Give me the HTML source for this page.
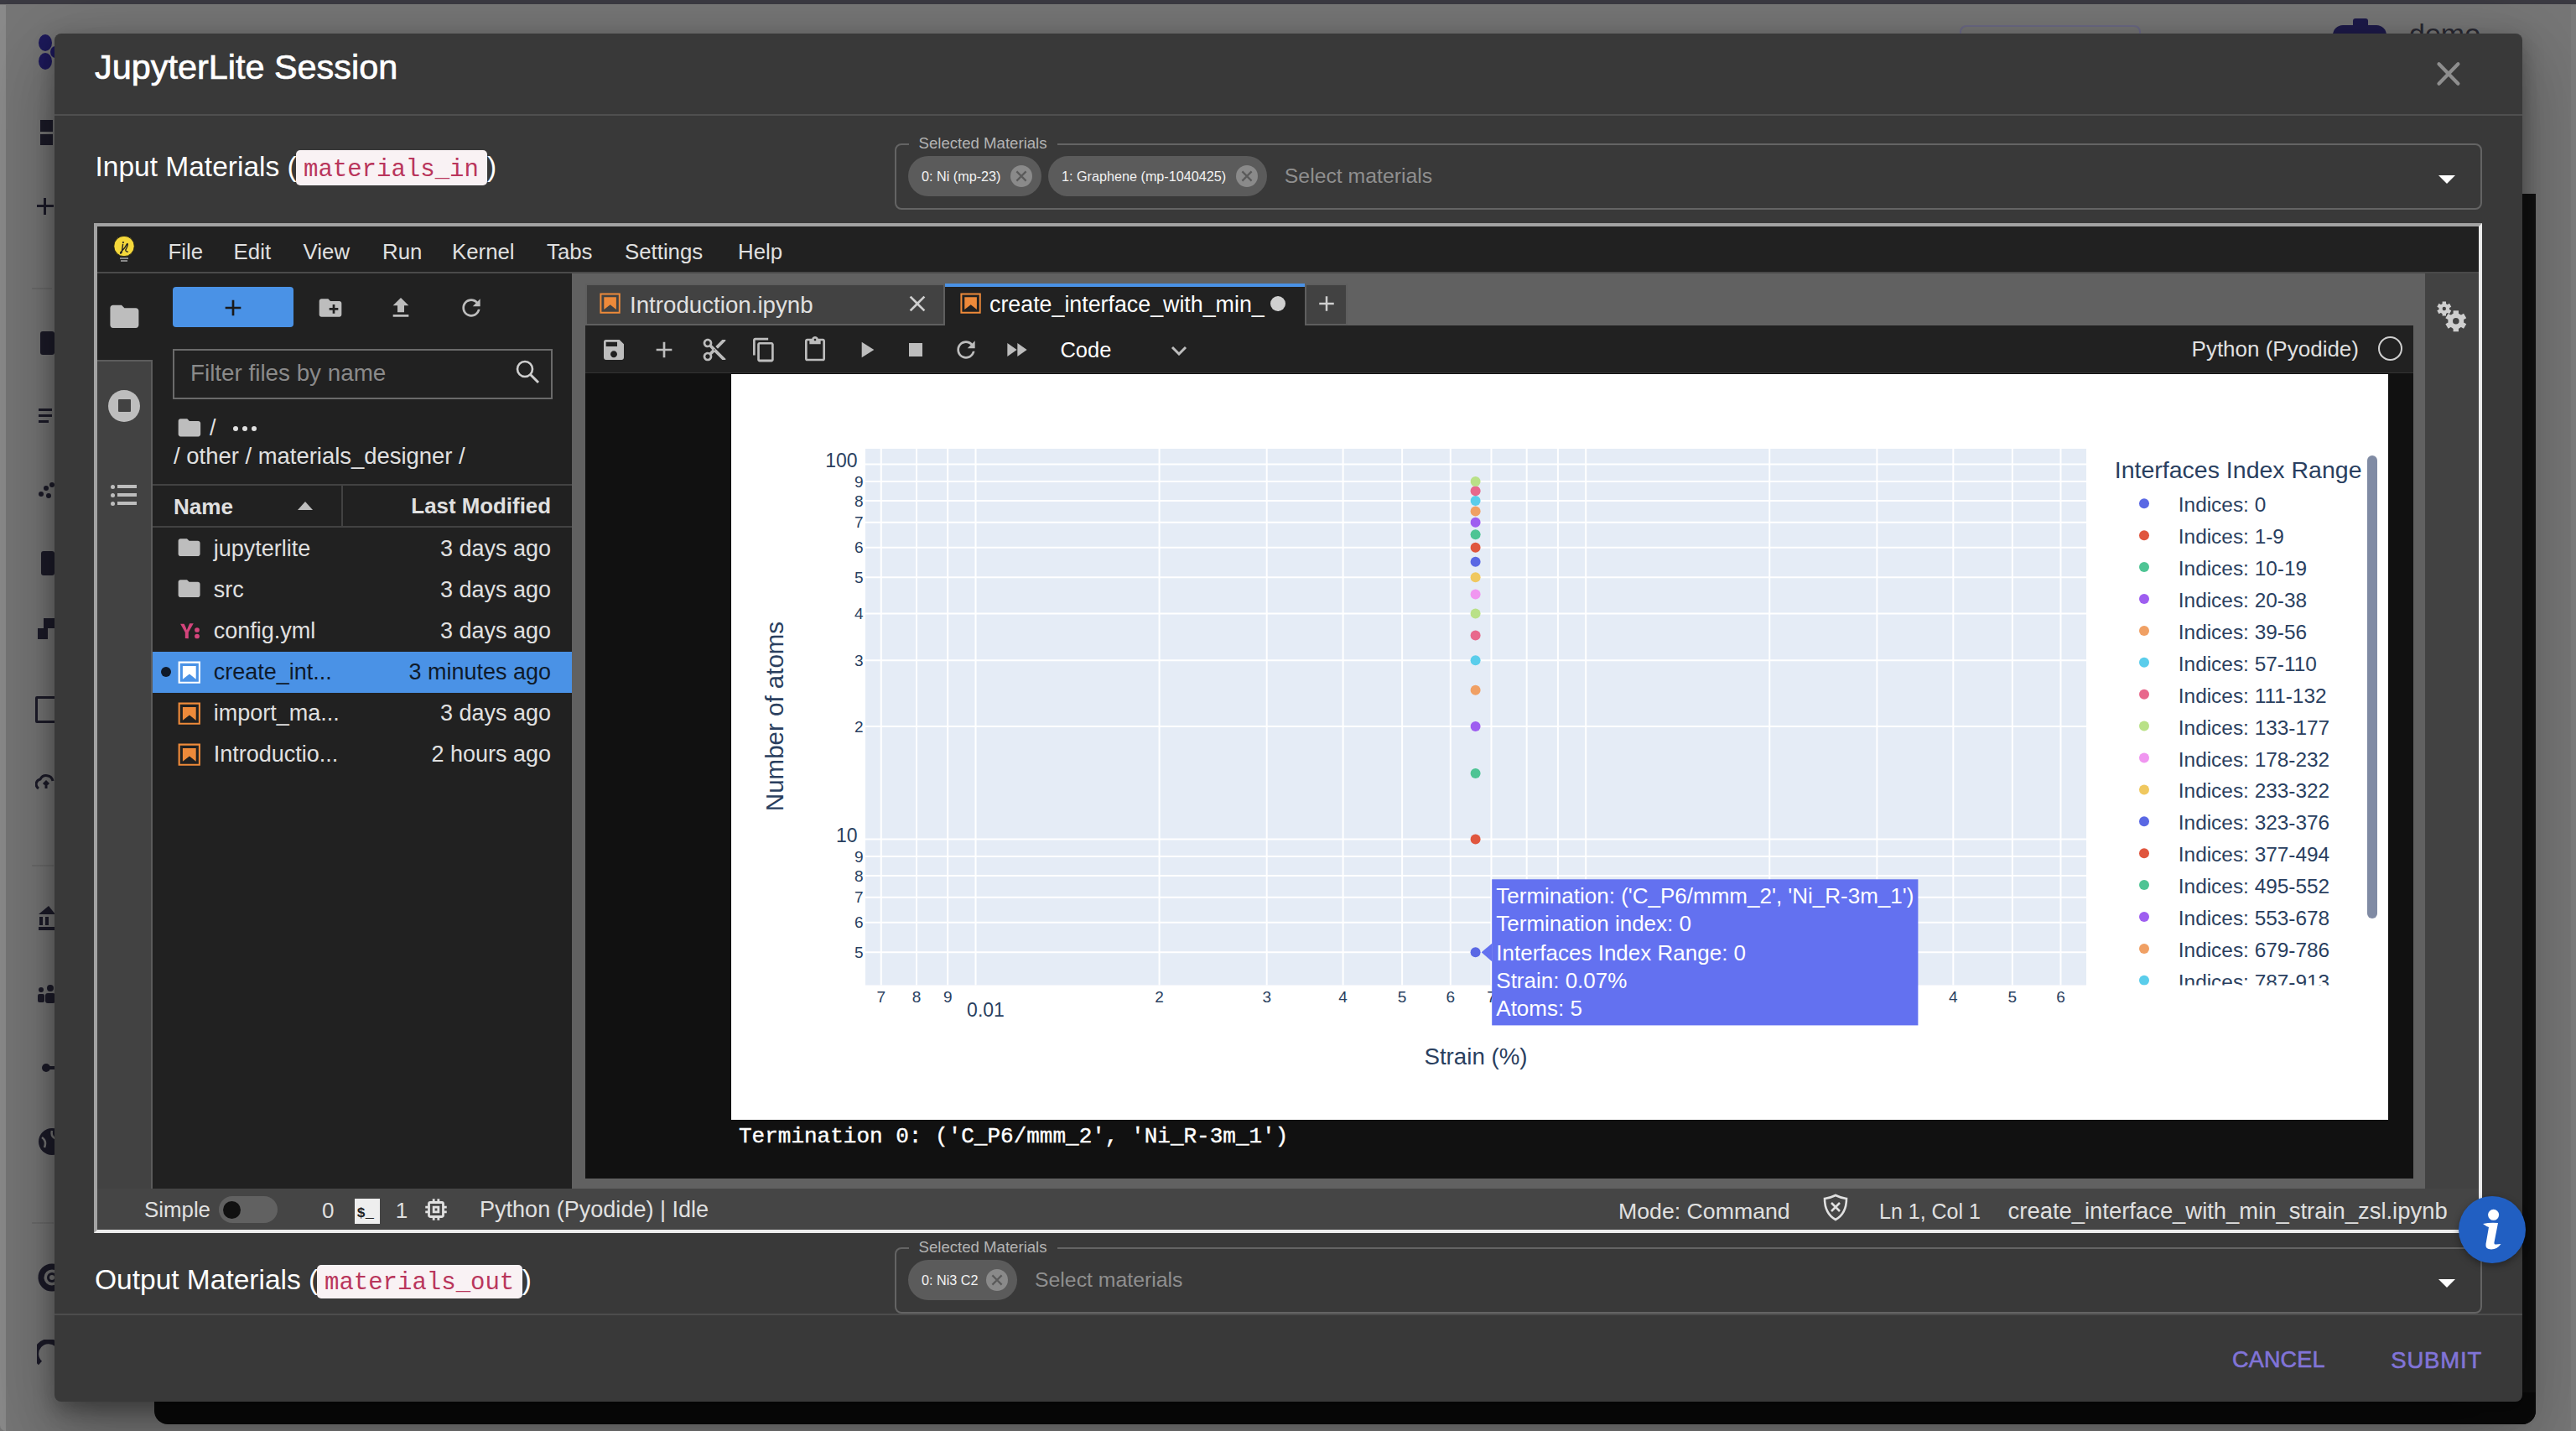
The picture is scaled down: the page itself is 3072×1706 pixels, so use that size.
<!DOCTYPE html><html><head><meta charset="utf-8"><style>
html,body{margin:0;padding:0;width:3072px;height:1706px;overflow:hidden;background:#767676;font-family:"Liberation Sans",sans-serif;}
div,svg{box-sizing:border-box;}
</style></head><body><div style="position:absolute;left:0px;top:0px;width:3072px;height:5px;background:#3b3a42;"></div><div style="position:absolute;left:0px;top:6px;width:7px;height:1700px;background:#8a8a8a;border-bottom-left-radius:16px;"></div><div style="position:absolute;left:3066px;top:6px;width:6px;height:1700px;background:#7c7c7c;"></div><div style="position:absolute;left:3007px;top:231px;width:17px;height:1467px;background:#111111;border-bottom-right-radius:16px;"></div><div style="position:absolute;left:184px;top:1660px;width:2840px;height:38px;background:#0b0b0b;border-bottom-left-radius:16px;border-bottom-right-radius:16px;"></div><div style="position:absolute;left:2337px;top:30px;width:216px;height:40px;border:2px solid #6c6a86;border-radius:8px;"></div><div style="position:absolute;left:2806px;top:22px;width:18px;height:14px;background:#1e1b4a;border-radius:3px;"></div><div style="position:absolute;left:2782px;top:30px;width:64px;height:20px;background:#1e1b4a;border-radius:12px 12px 0 0;"></div><div style="position:absolute;left:2873px;top:23.22px;font:normal 34px/34px 'Liberation Sans', sans-serif;color:#2a2a33;white-space:pre;">demo</div><svg style="position:absolute;left:44px;top:40px" width="24" height="44" viewBox="0 0 24 44"><g fill="#1e1a5c"><ellipse cx="10" cy="11" rx="8" ry="10"/><ellipse cx="10" cy="33" rx="8" ry="10"/><ellipse cx="22" cy="22" rx="6" ry="7"/></g></svg><div style="position:absolute;left:48px;top:143px;width:15px;height:14px;background:#1d1c2a;"></div><div style="position:absolute;left:48px;top:160px;width:15px;height:13px;background:#1d1c2a;"></div><div style="position:absolute;left:52px;top:236px;width:3px;height:20px;background:#1d1c2a;"></div><div style="position:absolute;left:44px;top:244px;width:20px;height:3px;background:#1d1c2a;"></div><div style="position:absolute;left:38px;top:343px;width:24px;height:2px;background:#6c6c6c;"></div><div style="position:absolute;left:48px;top:395px;width:17px;height:28px;background:#1d1c2a;border-radius:3px;"></div><div style="position:absolute;left:46px;top:487px;width:16px;height:3px;background:#1d1c2a;"></div><div style="position:absolute;left:46px;top:494px;width:16px;height:3px;background:#1d1c2a;"></div><div style="position:absolute;left:46px;top:501px;width:12px;height:3px;background:#1d1c2a;"></div><svg style="position:absolute;left:44px;top:573px" width="22" height="22"><g fill="#1d1c2a"><circle cx="5" cy="16" r="3"/><circle cx="11" cy="9" r="3"/><circle cx="14" cy="18" r="3"/><circle cx="18" cy="5" r="3"/></g></svg><div style="position:absolute;left:49px;top:657px;width:16px;height:29px;background:#1d1c2a;border-radius:3px;"></div><div style="position:absolute;left:45px;top:749px;width:12px;height:13px;background:#1d1c2a;"></div><div style="position:absolute;left:52px;top:737px;width:13px;height:12px;background:#1d1c2a;"></div><div style="position:absolute;left:42px;top:830px;width:26px;height:32px;border:3px solid #1d1c2a;border-radius:2px;"></div><svg style="position:absolute;left:42px;top:920px" width="26" height="26"><path d="M4 20 a6 6 0 0 1 2-11 a8 8 0 0 1 15 2 M13 12 v8 M10 15 l3-3 3 3" fill="none" stroke="#1d1c2a" stroke-width="3"/></svg><div style="position:absolute;left:38px;top:1031px;width:26px;height:2px;background:#6c6c6c;"></div><svg style="position:absolute;left:44px;top:1080px" width="22" height="30"><g fill="#1d1c2a"><path d="M2 10 L14 0 L22 10z"/><rect x="3" y="13" width="4" height="10"/><rect x="10" y="13" width="4" height="10"/><rect x="2" y="25" width="20" height="4"/></g></svg><svg style="position:absolute;left:44px;top:1172px" width="22" height="26"><g fill="#1d1c2a"><circle cx="5" cy="8" r="3"/><circle cx="16" cy="6" r="4"/><rect x="1" y="13" width="8" height="10" rx="2"/><rect x="10" y="12" width="12" height="12" rx="3"/></g></svg><svg style="position:absolute;left:44px;top:1262px" width="22" height="22"><g fill="#1d1c2a"><circle cx="11" cy="11" r="5"/><rect x="11" y="9" width="12" height="4"/></g></svg><svg style="position:absolute;left:44px;top:1344px" width="24" height="34"><circle cx="18" cy="17" r="16" fill="#1d1c2a"/><path d="M6 12 Q12 16 9 24 M18 4 Q16 12 24 14" stroke="#777" stroke-width="2.5" fill="none"/></svg><div style="position:absolute;left:38px;top:1457px;width:26px;height:2px;background:#6c6c6c;"></div><svg style="position:absolute;left:44px;top:1505px" width="24" height="36"><circle cx="18" cy="18" r="13" fill="none" stroke="#1d1c2a" stroke-width="7"/><circle cx="18" cy="18" r="6" fill="#1d1c2a"/><circle cx="18" cy="18" r="3" fill="#777"/></svg><svg style="position:absolute;left:44px;top:1597px" width="24" height="36"><path d="M4 28 A14 14 0 0 1 24 6" fill="none" stroke="#1d1c2a" stroke-width="6"/></svg><div style="position:absolute;left:65px;top:40px;width:2943px;height:1631px;background:#393939;border-radius:8px;box-shadow:0 22px 30px -14px rgba(0,0,0,.2),0 48px 76px 6px rgba(0,0,0,.14),0 18px 92px 16px rgba(0,0,0,.12),0 8px 24px 2px rgba(0,0,0,.22);"></div><div style="position:absolute;left:113px;top:59.95px;font:normal 41.4px/41.4px 'Liberation Sans', sans-serif;color:#ffffff;white-space:pre;-webkit-text-stroke:0.7px #fff;">JupyterLite Session</div><svg style="position:absolute;left:2900px;top:68px;" width="40" height="40" viewBox="0 0 40 40"><path d="M8.5 8.3 L31.4 31.7 M31.4 8.3 L8.5 31.7" stroke="#8e8e8e" stroke-width="4.2" stroke-linecap="round"/></svg><div style="position:absolute;left:65px;top:136px;width:2943px;height:2px;background:#4f4f4f;"></div><div style="position:absolute;left:113.5px;top:181.64px;font:normal 33.5px/33.5px 'Liberation Sans', sans-serif;color:#ffffff;white-space:pre;">Input Materials (</div><div style="position:absolute;left:352.7px;top:179px;width:228.3px;height:42px;background:#f9f2f4;border-radius:5px;"></div><div style="position:absolute;left:362px;top:187.77px;font:normal 29px/29px 'Liberation Mono', monospace;color:#b9365c;white-space:pre;">materials_in</div><div style="position:absolute;left:581px;top:181.64px;font:normal 33.5px/33.5px 'Liberation Sans', sans-serif;color:#ffffff;white-space:pre;">)</div><div style="position:absolute;left:1067px;top:171px;width:1893px;height:79px;border:2px solid #646464;border-radius:8px;"></div><div style="position:absolute;left:1084px;top:167px;width:177px;height:8px;background:#393939;"></div><div style="position:absolute;left:1095.6px;top:162.26px;font:normal 18.6px/18.6px 'Liberation Sans', sans-serif;color:#b4b4b4;white-space:pre;">Selected Materials</div><div style="position:absolute;left:1083px;top:186px;width:159px;height:48px;background:#5b5b5b;border-radius:24px;"></div><div style="position:absolute;left:1099px;top:202.29px;font:normal 16.2px/16.2px 'Liberation Sans', sans-serif;color:#f2f2f2;white-space:pre;">0: Ni (mp-23)</div><div style="position:absolute;left:1205px;top:197px;width:26px;height:26px;border-radius:13px;background:#8a8a8a;"></div><svg style="position:absolute;left:1209px;top:201px;" width="18" height="18" viewBox="0 0 18 18"><path d="M3.4 3.4 L14.6 14.6 M14.6 3.4 L3.4 14.6" stroke="#5a5a5a" stroke-width="2.2"/></svg><div style="position:absolute;left:1250px;top:186px;width:261px;height:48px;background:#5b5b5b;border-radius:24px;"></div><div style="position:absolute;left:1266px;top:202.29px;font:normal 16.2px/16.2px 'Liberation Sans', sans-serif;color:#f2f2f2;white-space:pre;">1: Graphene (mp-1040425)</div><div style="position:absolute;left:1474px;top:197px;width:26px;height:26px;border-radius:13px;background:#8a8a8a;"></div><svg style="position:absolute;left:1478px;top:201px;" width="18" height="18" viewBox="0 0 18 18"><path d="M3.4 3.4 L14.6 14.6 M14.6 3.4 L3.4 14.6" stroke="#5a5a5a" stroke-width="2.2"/></svg><div style="position:absolute;left:1531.8px;top:197.51px;font:normal 24.8px/24.8px 'Liberation Sans', sans-serif;color:#8f8f8f;white-space:pre;">Select materials</div><svg style="position:absolute;left:2908px;top:209px;" width="20" height="10" viewBox="0 0 20 10"><path d="M0 0 L20 0 L10 10z" fill="#fff"/></svg><div style="position:absolute;left:113px;top:1509.24px;font:normal 33.5px/33.5px 'Liberation Sans', sans-serif;color:#ffffff;white-space:pre;">Output Materials (</div><div style="position:absolute;left:378px;top:1507.5px;width:244.70000000000005px;height:40.90000000000009px;background:#f9f2f4;border-radius:5px;"></div><div style="position:absolute;left:387px;top:1515.37px;font:normal 29px/29px 'Liberation Mono', monospace;color:#b9365c;white-space:pre;">materials_out</div><div style="position:absolute;left:622.7px;top:1509.24px;font:normal 33.5px/33.5px 'Liberation Sans', sans-serif;color:#ffffff;white-space:pre;">)</div><div style="position:absolute;left:1067px;top:1487px;width:1893px;height:79px;border:2px solid #646464;border-radius:8px;"></div><div style="position:absolute;left:1084px;top:1483px;width:177px;height:8px;background:#393939;"></div><div style="position:absolute;left:1095.6px;top:1478.26px;font:normal 18.6px/18.6px 'Liberation Sans', sans-serif;color:#b4b4b4;white-space:pre;">Selected Materials</div><div style="position:absolute;left:1083px;top:1502px;width:129.5px;height:48px;background:#5b5b5b;border-radius:24px;"></div><div style="position:absolute;left:1099px;top:1518.29px;font:normal 16.2px/16.2px 'Liberation Sans', sans-serif;color:#f2f2f2;white-space:pre;">0: Ni3 C2</div><div style="position:absolute;left:1176px;top:1513px;width:26px;height:26px;border-radius:13px;background:#8a8a8a;"></div><svg style="position:absolute;left:1180px;top:1517px;" width="18" height="18" viewBox="0 0 18 18"><path d="M3.4 3.4 L14.6 14.6 M14.6 3.4 L3.4 14.6" stroke="#5a5a5a" stroke-width="2.2"/></svg><div style="position:absolute;left:1234px;top:1513.51px;font:normal 24.8px/24.8px 'Liberation Sans', sans-serif;color:#8f8f8f;white-space:pre;">Select materials</div><svg style="position:absolute;left:2908px;top:1525px;" width="20" height="10" viewBox="0 0 20 10"><path d="M0 0 L20 0 L10 10z" fill="#fff"/></svg><div style="position:absolute;left:65px;top:1566px;width:2943px;height:2px;background:#4d4d4d;"></div><div style="position:absolute;left:2662px;top:1608.14px;font:normal 27px/27px 'Liberation Sans', sans-serif;color:#8174d8;white-space:pre;-webkit-text-stroke:0.6px #8174d8;letter-spacing:0.2px;">CANCEL</div><div style="position:absolute;right:112px;top:1607.72px;font:normal 27.5px/27.5px 'Liberation Sans', sans-serif;color:#8174d8;white-space:pre;-webkit-text-stroke:0.6px #8174d8;letter-spacing:0.8px;">SUBMIT</div><div style="position:absolute;left:112px;top:266px;width:2848px;height:1204px;border-style:solid;border-width:4px;border-color:#a3a3a3 #ececec #ececec #a3a3a3;background:#616161;"></div><div style="position:absolute;left:116px;top:270px;width:2840px;height:55px;background:#212121;"></div><div style="position:absolute;left:116px;top:324px;width:2840px;height:2px;background:#4a4a4a;"></div><svg style="position:absolute;left:134px;top:280px" width="30" height="34" viewBox="0 0 30 34"><circle cx="14" cy="13.5" r="12.2" fill="#f5d83b" stroke="#111" stroke-width="0.8"/><path d="M12.6 10.8 L11.4 19.5 Q10.8 22.5 9.6 22 Q9 21 11 19.5 Q15 16 17 11.5 Q18.5 9.5 18.3 11.8 Q17.5 15 15.8 18 Q16 20.5 18.9 20" fill="none" stroke="#222" stroke-width="1.4"/><circle cx="12.9" cy="9" r="1.1" fill="#222"/><rect x="9" y="27" width="10" height="2" fill="#888"/><rect x="10" y="30" width="8" height="2" fill="#888"/></svg><div style="position:absolute;left:200.6px;top:288.16px;font:normal 25.8px/25.8px 'Liberation Sans', sans-serif;color:#e0e0e0;white-space:pre;">File</div><div style="position:absolute;left:278.6px;top:288.16px;font:normal 25.8px/25.8px 'Liberation Sans', sans-serif;color:#e0e0e0;white-space:pre;">Edit</div><div style="position:absolute;left:361.6px;top:288.16px;font:normal 25.8px/25.8px 'Liberation Sans', sans-serif;color:#e0e0e0;white-space:pre;">View</div><div style="position:absolute;left:456px;top:288.16px;font:normal 25.8px/25.8px 'Liberation Sans', sans-serif;color:#e0e0e0;white-space:pre;">Run</div><div style="position:absolute;left:539px;top:288.16px;font:normal 25.8px/25.8px 'Liberation Sans', sans-serif;color:#e0e0e0;white-space:pre;">Kernel</div><div style="position:absolute;left:652px;top:288.16px;font:normal 25.8px/25.8px 'Liberation Sans', sans-serif;color:#e0e0e0;white-space:pre;">Tabs</div><div style="position:absolute;left:745px;top:288.16px;font:normal 25.8px/25.8px 'Liberation Sans', sans-serif;color:#e0e0e0;white-space:pre;">Settings</div><div style="position:absolute;left:880px;top:288.16px;font:normal 25.8px/25.8px 'Liberation Sans', sans-serif;color:#e0e0e0;white-space:pre;">Help</div><div style="position:absolute;left:116px;top:326px;width:66px;height:1091px;background:#424242;"></div><div style="position:absolute;left:116px;top:326px;width:66px;height:104px;background:#212121;"></div><div style="position:absolute;left:116px;top:429px;width:66px;height:2px;background:#5c5c5c;"></div><div style="position:absolute;left:180px;top:430px;width:2px;height:987px;background:#5c5c5c;"></div><svg style="position:absolute;left:127.60px;top:356.60px;" width="40.8" height="40.8" viewBox="0 0 24 24"><g fill="#bdbdbd"><path d="M10 4H4c-1.1 0-1.99.9-1.99 2L2 18c0 1.1.9 2 2 2h16c1.1 0 2-.9 2-2V8c0-1.1-.9-2-2-2h-8l-2-2z"/></g></svg><div style="position:absolute;left:129px;top:465px;width:38px;height:38px;border-radius:19px;background:#bdbdbd;"></div><div style="position:absolute;left:141px;top:476px;width:15px;height:15px;background:#424242;border-radius:1px;"></div><div style="position:absolute;left:132px;top:577.5px;width:5px;height:5px;border-radius:3px;background:#bdbdbd;"></div><div style="position:absolute;left:140px;top:578px;width:23px;height:4px;background:#bdbdbd;"></div><div style="position:absolute;left:132px;top:587.5px;width:5px;height:5px;border-radius:3px;background:#bdbdbd;"></div><div style="position:absolute;left:140px;top:588px;width:23px;height:4px;background:#bdbdbd;"></div><div style="position:absolute;left:132px;top:597.5px;width:5px;height:5px;border-radius:3px;background:#bdbdbd;"></div><div style="position:absolute;left:140px;top:598px;width:23px;height:4px;background:#bdbdbd;"></div><div style="position:absolute;left:182px;top:326px;width:500px;height:1091px;background:#212121;"></div><div style="position:absolute;left:206px;top:342px;width:144px;height:48px;background:#4a92e6;border-radius:4px;"></div><svg style="position:absolute;left:262.00px;top:350.60px;" width="32" height="32" viewBox="0 0 24 24"><g fill="#1a1a1a"><path d="M19 13h-6v6h-2v-6H5v-2h6V5h2v6h6v2z"/></g></svg><svg style="position:absolute;left:378.00px;top:351.00px;" width="32" height="32" viewBox="0 0 24 24"><g fill="#bdbdbd"><path d="M20 6h-8l-2-2H4c-1.11 0-1.99.89-1.99 2L2 18c0 1.11.89 2 2 2h16c1.11 0 2-.89 2-2V8c0-1.11-.89-2-2-2zm-1 8h-3v3h-2v-3h-3v-2h3V9h2v3h3v2z"/></g></svg><svg style="position:absolute;left:461.60px;top:350.60px;" width="32" height="32" viewBox="0 0 24 24"><g fill="#bdbdbd"><path d="M9 16h6v-6h4l-7-7-7 7h4zm-4 2h14v2H5z"/></g></svg><svg style="position:absolute;left:546.00px;top:351.00px;" width="32" height="32" viewBox="0 0 18 18"><g fill="#bdbdbd"><path d="M9 13.5c-2.49 0-4.5-2.01-4.5-4.5S6.51 4.5 9 4.5c1.24 0 2.36.52 3.17 1.33L10 8h5V3l-1.76 1.76C12.15 3.68 10.66 3 9 3 5.69 3 3.01 5.69 3.01 9S5.69 15 9 15c2.97 0 5.43-2.16 5.9-5h-1.52c-.46 2-2.24 3.5-4.38 3.5z"/></g></svg><div style="position:absolute;left:206px;top:416px;width:453px;height:60px;border:2px solid #6a6a6a;"></div><div style="position:absolute;left:227px;top:431.47px;font:normal 27.8px/27.8px 'Liberation Sans', sans-serif;color:#8a8a8a;white-space:pre;">Filter files by name</div><svg style="position:absolute;left:613px;top:427px;" width="34" height="34" viewBox="0 0 34 34"><circle cx="13" cy="13" r="9" fill="none" stroke="#cfcfcf" stroke-width="2.6"/><path d="M19.5 19.5 L29 29" stroke="#cfcfcf" stroke-width="3"/></svg><svg style="position:absolute;left:210.10px;top:494.10px;" width="31.8" height="31.8" viewBox="0 0 24 24"><g fill="#bdbdbd"><path d="M10 4H4c-1.1 0-1.99.9-1.99 2L2 18c0 1.1.9 2 2 2h16c1.1 0 2-.9 2-2V8c0-1.1-.9-2-2-2h-8l-2-2z"/></g></svg><div style="position:absolute;left:250px;top:497.14px;font:normal 27px/27px 'Liberation Sans', sans-serif;color:#e0e0e0;white-space:pre;">/</div><div style="position:absolute;left:277.5px;top:507.8px;width:6px;height:6px;border-radius:3px;background:#e0e0e0;"></div><div style="position:absolute;left:288.5px;top:507.8px;width:6px;height:6px;border-radius:3px;background:#e0e0e0;"></div><div style="position:absolute;left:299.5px;top:507.8px;width:6px;height:6px;border-radius:3px;background:#e0e0e0;"></div><div style="position:absolute;left:207px;top:529.76px;font:normal 27.45px/27.45px 'Liberation Sans', sans-serif;color:#e0e0e0;white-space:pre;">/ other / materials_designer /</div><div style="position:absolute;left:182px;top:577px;width:500px;height:2px;background:#424242;"></div><div style="position:absolute;left:207px;top:590.63px;font:bold 26.07px/26.07px 'Liberation Sans', sans-serif;color:#e0e0e0;white-space:pre;">Name</div><svg style="position:absolute;left:355px;top:598px;" width="18" height="10" viewBox="0 0 18 10"><path d="M0 10 L9 0 L18 10z" fill="#bdbdbd"/></svg><div style="position:absolute;left:407px;top:579px;width:2px;height:49px;background:#424242;"></div><div style="position:absolute;right:2415px;top:590.80px;font:bold 25.87px/25.87px 'Liberation Sans', sans-serif;color:#e0e0e0;white-space:pre;">Last Modified</div><div style="position:absolute;left:182px;top:627px;width:500px;height:2px;background:#424242;"></div><svg style="position:absolute;left:210.40px;top:637.40px;" width="31.2" height="31.2" viewBox="0 0 24 24"><g fill="#bdbdbd"><path d="M10 4H4c-1.1 0-1.99.9-1.99 2L2 18c0 1.1.9 2 2 2h16c1.1 0 2-.9 2-2V8c0-1.1-.9-2-2-2h-8l-2-2z"/></g></svg><div style="position:absolute;left:254.7px;top:641.14px;font:normal 27px/27px 'Liberation Sans', sans-serif;color:#e0e0e0;white-space:pre;">jupyterlite</div><div style="position:absolute;right:2415px;top:641.14px;font:normal 27px/27px 'Liberation Sans', sans-serif;color:#e0e0e0;white-space:pre;">3 days ago</div><svg style="position:absolute;left:210.40px;top:686.40px;" width="31.2" height="31.2" viewBox="0 0 24 24"><g fill="#bdbdbd"><path d="M10 4H4c-1.1 0-1.99.9-1.99 2L2 18c0 1.1.9 2 2 2h16c1.1 0 2-.9 2-2V8c0-1.1-.9-2-2-2h-8l-2-2z"/></g></svg><div style="position:absolute;left:254.7px;top:690.14px;font:normal 27px/27px 'Liberation Sans', sans-serif;color:#e0e0e0;white-space:pre;">src</div><div style="position:absolute;right:2415px;top:690.14px;font:normal 27px/27px 'Liberation Sans', sans-serif;color:#e0e0e0;white-space:pre;">3 days ago</div><svg style="position:absolute;left:211.00px;top:736.00px;" width="30" height="30" viewBox="0 0 22 22"><g fill="#d4457c"><path d="M7.2 18.6v-5.4L3 5.6h3.3l1.4 3.1c.3.9.6 1.6 1 2.5.3-.8.6-1.6 1-2.5l1.4-3.3h3.4l-4.4 7.6v5.5l-2.9-.1z"/><circle cx="17.6" cy="16.5" r="2.1"/><circle cx="17.6" cy="11" r="2.1"/></g></svg><div style="position:absolute;left:254.7px;top:739.14px;font:normal 27px/27px 'Liberation Sans', sans-serif;color:#e0e0e0;white-space:pre;">config.yml</div><div style="position:absolute;right:2415px;top:739.14px;font:normal 27px/27px 'Liberation Sans', sans-serif;color:#e0e0e0;white-space:pre;">3 days ago</div><div style="position:absolute;left:182px;top:777px;width:500px;height:49px;background:#4a92e6;"></div><div style="position:absolute;left:191.6px;top:795px;width:12px;height:12px;border-radius:6px;background:#0f1a2a;"></div><svg style="position:absolute;left:210.20px;top:785.70px;" width="31.6" height="31.6" viewBox="0 0 22 22"><g fill="#ffffff"><path d="M18.7 3.3v15.4H3.3V3.3h15.4m1.5-1.5H1.8v18.3h18.3l.1-18.3z"/><path d="M16.5 16.5l-5.4-4.3-5.6 4.3v-11h11z"/></g></svg><div style="position:absolute;left:254.7px;top:788.14px;font:normal 27px/27px 'Liberation Sans', sans-serif;color:#0f1a2a;white-space:pre;">create_int...</div><div style="position:absolute;right:2415px;top:788.14px;font:normal 27px/27px 'Liberation Sans', sans-serif;color:#0f1a2a;white-space:pre;">3 minutes ago</div><svg style="position:absolute;left:210.20px;top:834.70px;" width="31.6" height="31.6" viewBox="0 0 22 22"><g fill="#ee8a3a"><path d="M18.7 3.3v15.4H3.3V3.3h15.4m1.5-1.5H1.8v18.3h18.3l.1-18.3z"/><path d="M16.5 16.5l-5.4-4.3-5.6 4.3v-11h11z"/></g></svg><div style="position:absolute;left:254.7px;top:837.14px;font:normal 27px/27px 'Liberation Sans', sans-serif;color:#e0e0e0;white-space:pre;">import_ma...</div><div style="position:absolute;right:2415px;top:837.14px;font:normal 27px/27px 'Liberation Sans', sans-serif;color:#e0e0e0;white-space:pre;">3 days ago</div><svg style="position:absolute;left:210.20px;top:883.70px;" width="31.6" height="31.6" viewBox="0 0 22 22"><g fill="#ee8a3a"><path d="M18.7 3.3v15.4H3.3V3.3h15.4m1.5-1.5H1.8v18.3h18.3l.1-18.3z"/><path d="M16.5 16.5l-5.4-4.3-5.6 4.3v-11h11z"/></g></svg><div style="position:absolute;left:254.7px;top:886.14px;font:normal 27px/27px 'Liberation Sans', sans-serif;color:#e0e0e0;white-space:pre;">Introductio...</div><div style="position:absolute;right:2415px;top:886.14px;font:normal 27px/27px 'Liberation Sans', sans-serif;color:#e0e0e0;white-space:pre;">2 hours ago</div><div style="position:absolute;left:698px;top:338px;width:429px;height:49px;background:#5e5e5e;"></div><div style="position:absolute;left:700px;top:340px;width:425px;height:46px;background:#424242;"></div><svg style="position:absolute;left:713.40px;top:347.40px;" width="29.2" height="29.2" viewBox="0 0 22 22"><g fill="#ee8a3a"><path d="M18.7 3.3v15.4H3.3V3.3h15.4m1.5-1.5H1.8v18.3h18.3l.1-18.3z"/><path d="M16.5 16.5l-5.4-4.3-5.6 4.3v-11h11z"/></g></svg><div style="position:absolute;left:751px;top:349.55px;font:normal 27.7px/27.7px 'Liberation Sans', sans-serif;color:#e0e0e0;white-space:pre;">Introduction.ipynb</div><svg style="position:absolute;left:1077.70px;top:346.00px;" width="32" height="32" viewBox="0 0 24 24"><g fill="#cfcfcf"><path d="M19 6.41L17.59 5 12 10.59 6.41 5 5 6.41 10.59 12 5 17.59 6.41 19 12 13.41 17.59 19 19 17.59 13.41 12z"/></g></svg><div style="position:absolute;left:1127px;top:338px;width:429px;height:50px;background:#212121;"></div><div style="position:absolute;left:1127px;top:338px;width:429px;height:4px;background:#4a92e6;"></div><svg style="position:absolute;left:1143.40px;top:347.40px;" width="29.2" height="29.2" viewBox="0 0 22 22"><g fill="#ee8a3a"><path d="M18.7 3.3v15.4H3.3V3.3h15.4m1.5-1.5H1.8v18.3h18.3l.1-18.3z"/><path d="M16.5 16.5l-5.4-4.3-5.6 4.3v-11h11z"/></g></svg><div style="position:absolute;left:1180px;top:350.31px;font:normal 26.8px/26.8px 'Liberation Sans', sans-serif;color:#ffffff;white-space:pre;">create_interface_with_min_</div><div style="position:absolute;left:1515px;top:353px;width:18px;height:18px;border-radius:9px;background:#cfcfcf;"></div><div style="position:absolute;left:1556px;top:338px;width:51px;height:50px;background:#5e5e5e;"></div><div style="position:absolute;left:1558px;top:340px;width:47px;height:46px;background:#424242;"></div><svg style="position:absolute;left:1567.00px;top:347.00px;" width="30" height="30" viewBox="0 0 24 24"><g fill="#cfcfcf"><path d="M19 13h-6v6h-2v-6H5v-2h6V5h2v6h6v2z"/></g></svg><div style="position:absolute;left:698px;top:388px;width:2180px;height:56px;background:#212121;"></div><div style="position:absolute;left:698px;top:444px;width:2180px;height:1px;background:#333;"></div><svg style="position:absolute;left:716.00px;top:401.00px;" width="32" height="32" viewBox="0 0 24 24"><g fill="#bdbdbd"><path d="M17 3H5a2 2 0 00-2 2v14c0 1.1.9 2 2 2h14c1.1 0 2-.9 2-2V7l-4-4zm-5 16c-1.66 0-3-1.34-3-3s1.34-3 3-3 3 1.34 3 3-1.34 3-3 3zm3-10H5V5h10v4z"/></g></svg><svg style="position:absolute;left:776.00px;top:401.00px;" width="32" height="32" viewBox="0 0 24 24"><g fill="#bdbdbd"><path d="M19 13h-6v6h-2v-6H5v-2h6V5h2v6h6v2z"/></g></svg><svg style="position:absolute;left:836.00px;top:401.00px;" width="32" height="32" viewBox="0 0 24 24"><g fill="#bdbdbd"><path d="M9.64 7.64c.23-.5.36-1.05.36-1.64 0-2.21-1.79-4-4-4S2 3.79 2 6s1.79 4 4 4c.59 0 1.14-.13 1.64-.36L10 12l-2.36 2.36C7.14 14.13 6.59 14 6 14c-2.21 0-4 1.79-4 4s1.79 4 4 4 4-1.79 4-4c0-.59-.13-1.14-.36-1.64L12 14l7 7h3v-1L9.64 7.64zM6 8c-1.1 0-2-.89-2-2s.9-2 2-2 2 .89 2 2-.9 2-2 2zm0 12c-1.1 0-2-.89-2-2s.9-2 2-2 2 .89 2 2-.9 2-2 2zm6-7.5c-.28 0-.5-.22-.5-.5s.22-.5.5-.5.5.22.5.5-.22.5-.5.5zM19 3l-6 6 2 2 7-7V3z"/></g></svg><svg style="position:absolute;left:895.00px;top:401.00px;" width="32" height="32" viewBox="0 0 18 18"><g fill="#bdbdbd"><path d="M11.9,1H3.2C2.4,1,1.7,1.7,1.7,2.5v10.2h1.5V2.5h8.7V1z M14.1,3.9h-8c-0.8,0-1.5,0.7-1.5,1.5v10.2c0,0.8,0.7,1.5,1.5,1.5h8 c0.8,0,1.5-0.7,1.5-1.5V5.4C15.5,4.6,14.9,3.9,14.1,3.9z M14.1,15.5h-8V5.4h8V15.5z"/></g></svg><svg style="position:absolute;left:956.00px;top:401.00px;" width="32" height="32" viewBox="0 0 24 24"><g fill="#bdbdbd"><path d="M19 2h-4.18C14.4.84 13.3 0 12 0c-1.3 0-2.4.84-2.82 2H5c-1.1 0-2 .9-2 2v16c0 1.1.9 2 2 2h14c1.1 0 2-.9 2-2V4c0-1.1-.9-2-2-2zm-7 0c.55 0 1 .45 1 1s-.45 1-1 1-1-.45-1-1 .45-1 1-1zm7 18H5V4h2v3h10V4h2v16z"/></g></svg><svg style="position:absolute;left:1017.00px;top:401.00px;" width="32" height="32" viewBox="0 0 24 24"><g fill="#bdbdbd"><path d="M8 5v14l11-7z"/></g></svg><svg style="position:absolute;left:1076.00px;top:401.00px;" width="32" height="32" viewBox="0 0 24 24"><g fill="#bdbdbd"><path d="M6 6h12v12H6z"/></g></svg><svg style="position:absolute;left:1136.00px;top:401.00px;" width="32" height="32" viewBox="0 0 18 18"><g fill="#bdbdbd"><path d="M9 13.5c-2.49 0-4.5-2.01-4.5-4.5S6.51 4.5 9 4.5c1.24 0 2.36.52 3.17 1.33L10 8h5V3l-1.76 1.76C12.15 3.68 10.66 3 9 3 5.69 3 3.01 5.69 3.01 9S5.69 15 9 15c2.97 0 5.43-2.16 5.9-5h-1.52c-.46 2-2.24 3.5-4.38 3.5z"/></g></svg><svg style="position:absolute;left:1196.00px;top:401.00px;" width="32" height="32" viewBox="0 0 24 24"><g fill="#bdbdbd"><path d="M4 18l8.5-6L4 6v12zm9-12v12l8.5-6L13 6z"/></g></svg><div style="position:absolute;left:1264.4px;top:405.41px;font:normal 25.5px/25.5px 'Liberation Sans', sans-serif;color:#ffffff;white-space:pre;">Code</div><svg style="position:absolute;left:1396px;top:412px;" width="20" height="12" viewBox="0 0 20 12"><path d="M2 2 L10 10 L18 2" fill="none" stroke="#bdbdbd" stroke-width="3"/></svg><div style="position:absolute;right:259px;top:402.99px;font:normal 26px/26px 'Liberation Sans', sans-serif;color:#e0e0e0;white-space:pre;">Python (Pyodide)</div><div style="position:absolute;left:2835.5px;top:401px;width:29px;height:29px;border-radius:15px;border:2.4px solid #cfcfcf;"></div><div style="position:absolute;left:698px;top:445px;width:2180px;height:960px;background:#111111;"></div><div style="position:absolute;left:2892px;top:326px;width:64px;height:1091px;background:#424242;"></div><svg style="position:absolute;left:2900px;top:354px" width="44" height="44" viewBox="0 0 44 44"><g fill="#cfcfcf"><rect x="12.600000000000001" y="5.5" width="4.4" height="17" transform="rotate(0 14.8 14)"/><rect x="12.600000000000001" y="5.5" width="4.4" height="17" transform="rotate(60 14.8 14)"/><rect x="12.600000000000001" y="5.5" width="4.4" height="17" transform="rotate(120 14.8 14)"/><circle cx="14.8" cy="14" r="6.3"/><rect x="25.6" y="16.3" width="6.4" height="25" transform="rotate(0 28.8 28.8)"/><rect x="25.6" y="16.3" width="6.4" height="25" transform="rotate(60 28.8 28.8)"/><rect x="25.6" y="16.3" width="6.4" height="25" transform="rotate(120 28.8 28.8)"/><circle cx="28.8" cy="28.8" r="9.5"/></g><circle cx="14.8" cy="14" r="2.2" fill="#424242"/><circle cx="28.8" cy="28.8" r="3.8" fill="#424242"/></svg><div style="position:absolute;left:116px;top:1417px;width:2840px;height:49px;background:#454545;"></div><div style="position:absolute;left:172px;top:1430.12px;font:normal 25.85px/25.85px 'Liberation Sans', sans-serif;color:#e0e0e0;white-space:pre;">Simple</div><div style="position:absolute;left:261px;top:1426px;width:70px;height:32px;border-radius:16px;background:#616161;"></div><div style="position:absolute;left:266px;top:1432px;width:21px;height:21px;border-radius:11px;background:#111;"></div><div style="position:absolute;left:384px;top:1429.99px;font:normal 26px/26px 'Liberation Sans', sans-serif;color:#e0e0e0;white-space:pre;">0</div><div style="position:absolute;left:423px;top:1429px;width:30px;height:30px;background:#eeeeee;"></div><div style="position:absolute;left:425.5px;top:1437.97px;font:bold 17px/17px 'Liberation Mono', monospace;color:#222222;white-space:pre;">$_</div><div style="position:absolute;left:471.7px;top:1429.99px;font:normal 26px/26px 'Liberation Sans', sans-serif;color:#e0e0e0;white-space:pre;">1</div><svg style="position:absolute;left:503.00px;top:1425.00px;" width="34" height="34" viewBox="0 0 24 24"><g fill="#e0e0e0"><path d="M15 9H9v6h6V9zm-2 4h-2v-2h2v2zm8-2V9h-2V7c0-1.1-.9-2-2-2h-2V3h-2v2h-2V3H9v2H7c-1.1 0-2 .9-2 2v2H3v2h2v2H3v2h2v2c0 1.1.9 2 2 2h2v2h2v-2h2v2h2v-2h2c1.1 0 2-.9 2-2v-2h2v-2h-2v-2h2zm-4 6H7V7h10v10z"/></g></svg><div style="position:absolute;left:572px;top:1429.09px;font:normal 27.06px/27.06px 'Liberation Sans', sans-serif;color:#e0e0e0;white-space:pre;">Python (Pyodide) | Idle</div><div style="position:absolute;left:1930px;top:1430.90px;font:normal 26.7px/26.7px 'Liberation Sans', sans-serif;color:#e0e0e0;white-space:pre;">Mode: Command</div><svg style="position:absolute;left:2172px;top:1422px;" width="34" height="36" viewBox="0 0 34 36"><path d="M17 3 C13 5 8 6.5 4 7 C4 18 8 27 17 32 C26 27 30 18 30 7 C26 6.5 21 5 17 3z" fill="none" stroke="#e0e0e0" stroke-width="2.6"/><path d="M12 12 L22 22 M22 12 L12 22" stroke="#e0e0e0" stroke-width="2.6"/></svg><div style="position:absolute;left:2241px;top:1432.34px;font:normal 25px/25px 'Liberation Sans', sans-serif;color:#e0e0e0;white-space:pre;">Ln 1, Col 1</div><div style="position:absolute;left:2394.6px;top:1430.29px;font:normal 27.42px/27.42px 'Liberation Sans', sans-serif;color:#e0e0e0;white-space:pre;">create_interface_with_min_strain_zsl.ipynb</div><div style="position:absolute;left:872px;top:446px;width:1976px;height:889px;background:#ffffff;"></div><svg style="position:absolute;left:872px;top:446px;" width="1976" height="889" viewBox="0 0 1976 889"><rect x="160" y="89" width="1456" height="639.5" fill="#e5ecf6"/><line x1="178.78" y1="89" x2="178.78" y2="728.5" stroke="#fff" stroke-width="2"/><line x1="220.98" y1="89" x2="220.98" y2="728.5" stroke="#fff" stroke-width="2"/><line x1="258.20" y1="89" x2="258.20" y2="728.5" stroke="#fff" stroke-width="2"/><line x1="291.50" y1="89" x2="291.50" y2="728.5" stroke="#fff" stroke-width="2"/><line x1="510.56" y1="89" x2="510.56" y2="728.5" stroke="#fff" stroke-width="2"/><line x1="638.70" y1="89" x2="638.70" y2="728.5" stroke="#fff" stroke-width="2"/><line x1="729.62" y1="89" x2="729.62" y2="728.5" stroke="#fff" stroke-width="2"/><line x1="800.14" y1="89" x2="800.14" y2="728.5" stroke="#fff" stroke-width="2"/><line x1="857.76" y1="89" x2="857.76" y2="728.5" stroke="#fff" stroke-width="2"/><line x1="906.48" y1="89" x2="906.48" y2="728.5" stroke="#fff" stroke-width="2"/><line x1="948.68" y1="89" x2="948.68" y2="728.5" stroke="#fff" stroke-width="2"/><line x1="985.90" y1="89" x2="985.90" y2="728.5" stroke="#fff" stroke-width="2"/><line x1="1019.20" y1="89" x2="1019.20" y2="728.5" stroke="#fff" stroke-width="2"/><line x1="1238.26" y1="89" x2="1238.26" y2="728.5" stroke="#fff" stroke-width="2"/><line x1="1366.40" y1="89" x2="1366.40" y2="728.5" stroke="#fff" stroke-width="2"/><line x1="1457.32" y1="89" x2="1457.32" y2="728.5" stroke="#fff" stroke-width="2"/><line x1="1527.84" y1="89" x2="1527.84" y2="728.5" stroke="#fff" stroke-width="2"/><line x1="1585.46" y1="89" x2="1585.46" y2="728.5" stroke="#fff" stroke-width="2"/><line x1="160" y1="689.16" x2="1616" y2="689.16" stroke="#fff" stroke-width="2"/><line x1="160" y1="653.77" x2="1616" y2="653.77" stroke="#fff" stroke-width="2"/><line x1="160" y1="623.84" x2="1616" y2="623.84" stroke="#fff" stroke-width="2"/><line x1="160" y1="597.92" x2="1616" y2="597.92" stroke="#fff" stroke-width="2"/><line x1="160" y1="575.05" x2="1616" y2="575.05" stroke="#fff" stroke-width="2"/><line x1="160" y1="554.60" x2="1616" y2="554.60" stroke="#fff" stroke-width="2"/><line x1="160" y1="420.04" x2="1616" y2="420.04" stroke="#fff" stroke-width="2"/><line x1="160" y1="341.33" x2="1616" y2="341.33" stroke="#fff" stroke-width="2"/><line x1="160" y1="285.48" x2="1616" y2="285.48" stroke="#fff" stroke-width="2"/><line x1="160" y1="242.16" x2="1616" y2="242.16" stroke="#fff" stroke-width="2"/><line x1="160" y1="206.77" x2="1616" y2="206.77" stroke="#fff" stroke-width="2"/><line x1="160" y1="176.84" x2="1616" y2="176.84" stroke="#fff" stroke-width="2"/><line x1="160" y1="150.92" x2="1616" y2="150.92" stroke="#fff" stroke-width="2"/><line x1="160" y1="128.05" x2="1616" y2="128.05" stroke="#fff" stroke-width="2"/><line x1="160" y1="107.60" x2="1616" y2="107.60" stroke="#fff" stroke-width="2"/><text x="157.70000000000005" y="695.81" font-family="Liberation Sans" font-size="19" fill="#2a3f5f" text-anchor="end">5</text><text x="157.70000000000005" y="660.42" font-family="Liberation Sans" font-size="19" fill="#2a3f5f" text-anchor="end">6</text><text x="157.70000000000005" y="630.49" font-family="Liberation Sans" font-size="19" fill="#2a3f5f" text-anchor="end">7</text><text x="157.70000000000005" y="604.57" font-family="Liberation Sans" font-size="19" fill="#2a3f5f" text-anchor="end">8</text><text x="157.70000000000005" y="581.70" font-family="Liberation Sans" font-size="19" fill="#2a3f5f" text-anchor="end">9</text><text x="150.60000000000002" y="558.15" font-family="Liberation Sans" font-size="23" fill="#2a3f5f" text-anchor="end">10</text><text x="157.70000000000005" y="426.69" font-family="Liberation Sans" font-size="19" fill="#2a3f5f" text-anchor="end">2</text><text x="157.70000000000005" y="347.98" font-family="Liberation Sans" font-size="19" fill="#2a3f5f" text-anchor="end">3</text><text x="157.70000000000005" y="292.13" font-family="Liberation Sans" font-size="19" fill="#2a3f5f" text-anchor="end">4</text><text x="157.70000000000005" y="248.81" font-family="Liberation Sans" font-size="19" fill="#2a3f5f" text-anchor="end">5</text><text x="157.70000000000005" y="213.42" font-family="Liberation Sans" font-size="19" fill="#2a3f5f" text-anchor="end">6</text><text x="157.70000000000005" y="183.49" font-family="Liberation Sans" font-size="19" fill="#2a3f5f" text-anchor="end">7</text><text x="157.70000000000005" y="157.57" font-family="Liberation Sans" font-size="19" fill="#2a3f5f" text-anchor="end">8</text><text x="157.70000000000005" y="134.70" font-family="Liberation Sans" font-size="19" fill="#2a3f5f" text-anchor="end">9</text><text x="150.60000000000002" y="111.15" font-family="Liberation Sans" font-size="23" fill="#2a3f5f" text-anchor="end">100</text><text x="178.78" y="749" font-family="Liberation Sans" font-size="19" fill="#2a3f5f" text-anchor="middle">7</text><text x="220.98" y="749" font-family="Liberation Sans" font-size="19" fill="#2a3f5f" text-anchor="middle">8</text><text x="258.20" y="749" font-family="Liberation Sans" font-size="19" fill="#2a3f5f" text-anchor="middle">9</text><text x="303.50" y="766" font-family="Liberation Sans" font-size="23" fill="#2a3f5f" text-anchor="middle">0.01</text><text x="510.56" y="749" font-family="Liberation Sans" font-size="19" fill="#2a3f5f" text-anchor="middle">2</text><text x="638.70" y="749" font-family="Liberation Sans" font-size="19" fill="#2a3f5f" text-anchor="middle">3</text><text x="729.62" y="749" font-family="Liberation Sans" font-size="19" fill="#2a3f5f" text-anchor="middle">4</text><text x="800.14" y="749" font-family="Liberation Sans" font-size="19" fill="#2a3f5f" text-anchor="middle">5</text><text x="857.76" y="749" font-family="Liberation Sans" font-size="19" fill="#2a3f5f" text-anchor="middle">6</text><text x="906.48" y="749" font-family="Liberation Sans" font-size="19" fill="#2a3f5f" text-anchor="middle">7</text><text x="948.68" y="749" font-family="Liberation Sans" font-size="19" fill="#2a3f5f" text-anchor="middle">8</text><text x="985.90" y="749" font-family="Liberation Sans" font-size="19" fill="#2a3f5f" text-anchor="middle">9</text><text x="1031.20" y="766" font-family="Liberation Sans" font-size="23" fill="#2a3f5f" text-anchor="middle">0.1</text><text x="1238.26" y="749" font-family="Liberation Sans" font-size="19" fill="#2a3f5f" text-anchor="middle">2</text><text x="1366.40" y="749" font-family="Liberation Sans" font-size="19" fill="#2a3f5f" text-anchor="middle">3</text><text x="1457.32" y="749" font-family="Liberation Sans" font-size="19" fill="#2a3f5f" text-anchor="middle">4</text><text x="1527.84" y="749" font-family="Liberation Sans" font-size="19" fill="#2a3f5f" text-anchor="middle">5</text><text x="1585.46" y="749" font-family="Liberation Sans" font-size="19" fill="#2a3f5f" text-anchor="middle">6</text><text x="888" y="822.5999999999999" font-family="Liberation Sans" font-size="27.7" fill="#2a3f5f" text-anchor="middle">Strain (%)</text><text transform="translate(62,408) rotate(-90)" font-family="Liberation Sans" font-size="29.5" fill="#2a3f5f" text-anchor="middle">Number of atoms</text><circle cx="887.5999999999999" cy="689.16" r="6" fill="#5a68e4"/><circle cx="887.5999999999999" cy="554.60" r="6" fill="#e0563e"/><circle cx="887.5999999999999" cy="475.89" r="6" fill="#4ec494"/><circle cx="887.5999999999999" cy="420.04" r="6" fill="#9e5ef0"/><circle cx="887.5999999999999" cy="376.72" r="6" fill="#f0a064"/><circle cx="887.5999999999999" cy="341.33" r="6" fill="#5acdeb"/><circle cx="887.5999999999999" cy="311.40" r="6" fill="#e8688c"/><circle cx="887.5999999999999" cy="285.48" r="6" fill="#b9e187"/><circle cx="887.5999999999999" cy="262.61" r="6" fill="#f096f0"/><circle cx="887.5999999999999" cy="242.16" r="6" fill="#f0c85f"/><circle cx="887.5999999999999" cy="223.66" r="6" fill="#5a68e4"/><circle cx="887.5999999999999" cy="206.77" r="6" fill="#e0563e"/><circle cx="887.5999999999999" cy="191.23" r="6" fill="#4ec494"/><circle cx="887.5999999999999" cy="176.84" r="6" fill="#9e5ef0"/><circle cx="887.5999999999999" cy="163.45" r="6" fill="#f0a064"/><circle cx="887.5999999999999" cy="150.92" r="6" fill="#5acdeb"/><circle cx="887.5999999999999" cy="139.15" r="6" fill="#e8688c"/><circle cx="887.5999999999999" cy="128.05" r="6" fill="#b9e187"/><text x="1649.8000000000002" y="124" font-family="Liberation Sans" font-size="28.5" fill="#2a3f5f">Interfaces Index Range</text><defs><clipPath id="lc"><rect x="1628" y="134" width="330" height="594.5999999999999"/></clipPath></defs><g clip-path="url(#lc)"><circle cx="1685" cy="154.30" r="6" fill="#5a68e4"/><text x="1725.8000000000002" y="164.30" font-family="Liberation Sans" font-size="24.4" fill="#2a3f5f">Indices: 0</text><circle cx="1685" cy="192.20" r="6" fill="#e0563e"/><text x="1725.8000000000002" y="202.20" font-family="Liberation Sans" font-size="24.4" fill="#2a3f5f">Indices: 1-9</text><circle cx="1685" cy="230.10" r="6" fill="#4ec494"/><text x="1725.8000000000002" y="240.10" font-family="Liberation Sans" font-size="24.4" fill="#2a3f5f">Indices: 10-19</text><circle cx="1685" cy="268.00" r="6" fill="#9e5ef0"/><text x="1725.8000000000002" y="278.00" font-family="Liberation Sans" font-size="24.4" fill="#2a3f5f">Indices: 20-38</text><circle cx="1685" cy="305.90" r="6" fill="#f0a064"/><text x="1725.8000000000002" y="315.90" font-family="Liberation Sans" font-size="24.4" fill="#2a3f5f">Indices: 39-56</text><circle cx="1685" cy="343.80" r="6" fill="#5acdeb"/><text x="1725.8000000000002" y="353.80" font-family="Liberation Sans" font-size="24.4" fill="#2a3f5f">Indices: 57-110</text><circle cx="1685" cy="381.70" r="6" fill="#e8688c"/><text x="1725.8000000000002" y="391.70" font-family="Liberation Sans" font-size="24.4" fill="#2a3f5f">Indices: 111-132</text><circle cx="1685" cy="419.60" r="6" fill="#b9e187"/><text x="1725.8000000000002" y="429.60" font-family="Liberation Sans" font-size="24.4" fill="#2a3f5f">Indices: 133-177</text><circle cx="1685" cy="457.50" r="6" fill="#f096f0"/><text x="1725.8000000000002" y="467.50" font-family="Liberation Sans" font-size="24.4" fill="#2a3f5f">Indices: 178-232</text><circle cx="1685" cy="495.40" r="6" fill="#f0c85f"/><text x="1725.8000000000002" y="505.40" font-family="Liberation Sans" font-size="24.4" fill="#2a3f5f">Indices: 233-322</text><circle cx="1685" cy="533.30" r="6" fill="#5a68e4"/><text x="1725.8000000000002" y="543.30" font-family="Liberation Sans" font-size="24.4" fill="#2a3f5f">Indices: 323-376</text><circle cx="1685" cy="571.20" r="6" fill="#e0563e"/><text x="1725.8000000000002" y="581.20" font-family="Liberation Sans" font-size="24.4" fill="#2a3f5f">Indices: 377-494</text><circle cx="1685" cy="609.10" r="6" fill="#4ec494"/><text x="1725.8000000000002" y="619.10" font-family="Liberation Sans" font-size="24.4" fill="#2a3f5f">Indices: 495-552</text><circle cx="1685" cy="647.00" r="6" fill="#9e5ef0"/><text x="1725.8000000000002" y="657.00" font-family="Liberation Sans" font-size="24.4" fill="#2a3f5f">Indices: 553-678</text><circle cx="1685" cy="684.90" r="6" fill="#f0a064"/><text x="1725.8000000000002" y="694.90" font-family="Liberation Sans" font-size="24.4" fill="#2a3f5f">Indices: 679-786</text><circle cx="1685" cy="722.80" r="6" fill="#5acdeb"/><text x="1725.8000000000002" y="732.80" font-family="Liberation Sans" font-size="24.4" fill="#2a3f5f">Indices: 787-913</text></g><rect x="1951" y="97" width="12" height="552" rx="6" fill="#808ba4"/><rect x="907.2" y="602.3" width="508.2" height="174.1" fill="#6371f0"/><path d="M894.5999999999999 689.3 L907.5 678.4000000000001 L907.5 700.5999999999999z" fill="#6371f0"/><text x="912.3" y="631.2" font-family="Liberation Sans" font-size="26" fill="#fff">Termination: ('C_P6/mmm_2', 'Ni_R-3m_1')</text><text x="912.3" y="664.3" font-family="Liberation Sans" font-size="26" fill="#fff">Termination index: 0</text><text x="912.3" y="698.5" font-family="Liberation Sans" font-size="26" fill="#fff">Interfaces Index Range: 0</text><text x="912.3" y="731.5" font-family="Liberation Sans" font-size="26" fill="#fff">Strain: 0.07%</text><text x="912.3" y="764.5999999999999" font-family="Liberation Sans" font-size="26" fill="#fff">Atoms: 5</text></svg><div style="position:absolute;left:881px;top:1341.57px;font:normal 26px/26px 'Liberation Mono', monospace;color:#ffffff;white-space:pre;-webkit-text-stroke:0.4px #fff;">Termination 0: ('C_P6/mmm_2', 'Ni_R-3m_1')</div><div style="position:absolute;left:2932px;top:1426px;width:80px;height:80px;border-radius:40px;background:#215fc2;box-shadow:0 3px 8px rgba(0,0,0,0.35);"></div><svg style="position:absolute;left:2932px;top:1426px;" width="80" height="80" viewBox="0 0 80 80"><circle cx="41.6" cy="22.3" r="6.5" fill="#fff"/><path d="M29 33 Q38 31 47 32 L42.5 55 Q42 58 45 57.5 L50.5 57 Q46 63.5 39 63.5 Q31.5 63.5 32.5 57 L36 37 Q33 36 29 33 Z" fill="#fff"/></svg></body></html>
